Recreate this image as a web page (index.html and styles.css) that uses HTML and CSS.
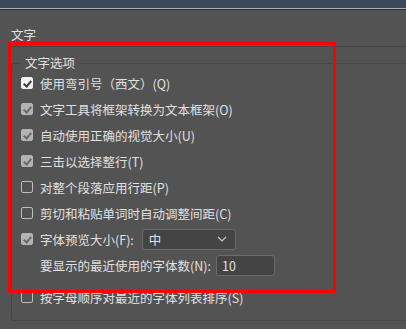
FILE: index.html
```html
<!DOCTYPE html>
<html lang="zh-CN">
<head>
    <meta charset="UTF-8">
    <title>首选项 - 文字</title>
    <link rel="stylesheet" href="styles.css">
</head>
<body>
    <div class="titlebar"></div>

    <div class="pane">
        <div class="section-title">文字</div>

        <fieldset class="group">
            <legend>文字选项</legend>

            <label class="row">
                <span class="check on focus"></span>
                <span>使用弯引号（西文）(Q)</span>
            </label>
            <label class="row">
                <span class="check on"></span>
                <span>文字工具将框架转换为文本框架(O)</span>
            </label>
            <label class="row">
                <span class="check on"></span>
                <span>自动使用正确的视觉大小(U)</span>
            </label>
            <label class="row">
                <span class="check on"></span>
                <span>三击以选择整行(T)</span>
            </label>
            <label class="row">
                <span class="check"></span>
                <span>对整个段落应用行距(P)</span>
            </label>
            <label class="row">
                <span class="check"></span>
                <span>剪切和粘贴单词时自动调整间距(C)</span>
            </label>
            <div class="row">
                <span class="check on"></span>
                <span>字体预览大小(F):</span>
                <div class="select">
                    <span>中</span>
                    <svg width="10" height="6" viewBox="0 0 10 6"><path d="M1 1l4 4 4-4" fill="none" stroke="#c8c8c8" stroke-width="1.2"/></svg>
                </div>
            </div>
            <div class="row sub">
                <span>要显示的最近使用的字体数(N):</span>
                <div class="field">10</div>
            </div>
            <label class="row last">
                <span class="check"></span>
                <span>按字母顺序对最近的字体列表排序(S)</span>
            </label>
        </fieldset>
    </div>

    <!-- 标注用的红框 -->
    <div class="highlight"></div>
</body>
</html>
```

FILE: styles.css
```css
* {
    margin: 0;
    padding: 0;
    box-sizing: border-box;
}

body {
    width: 406px;
    height: 329px;
    overflow: hidden;
    background: #535353;
    color: #e0e0e0;
    font-family: 'Noto Sans CJK SC', 'Noto Sans', sans-serif;
    font-size: 12.5px;
    position: relative;
}

.titlebar {
    height: 10px;
    background: #3b4a5a;
    border-bottom: 1px solid #2c2c2c;
    box-shadow: inset 0 -1px 0 #a4b2c0;
}

.pane {
    padding-left: 11px;
}

.section-title {
    margin-top: 17px;
    line-height: 16px;
    height: 20px;
    border-bottom: 1px solid #464646;
}

.group {
    margin-top: 9px;
    border: 1px solid #474747;
    border-right: none;
    border-radius: 3px 0 0 3px;
    padding: 0 0 10px 9px;
}

.group legend {
    line-height: 14px;
    padding: 0 4px;
}

.row {
    display: flex;
    align-items: center;
    height: 26px;
    gap: 7px;
}

.row.sub {
    padding-left: 19px;
}

.row.last {
    margin-top: 6px;
}

.check {
    width: 12px;
    height: 12px;
    border: 1px solid #bdbdbd;
    border-radius: 2px;
    flex-shrink: 0;
    position: relative;
}

.check.on {
    background: #b3b3b3;
    border-color: #b3b3b3;
}

.check.on::after {
    content: '';
    position: absolute;
    left: 3px;
    top: 1px;
    width: 3px;
    height: 6px;
    border: solid #6a6a6a;
    border-width: 0 2px 2px 0;
    transform: rotate(40deg);
}

.check.focus {
    background: #f2f2f2;
    border-color: #f2f2f2;
}

.check.focus::after {
    border-color: #3a3a3a;
}

.select {
    width: 94px;
    height: 21px;
    margin-left: 1px;
    background: #444;
    border: 1px solid #6b6b6b;
    border-radius: 3px;
    display: flex;
    align-items: center;
    justify-content: space-between;
    padding: 0 8px 0 6px;
}

.field {
    width: 59px;
    height: 21px;
    margin-left: -2px;
    background: #444;
    border: 1px solid #6b6b6b;
    border-radius: 3px;
    padding-left: 5px;
    line-height: 19px;
}

.highlight {
    position: absolute;
    left: 8px;
    top: 42px;
    width: 328px;
    height: 251px;
    border: 3px solid #ff0000;
}
```
